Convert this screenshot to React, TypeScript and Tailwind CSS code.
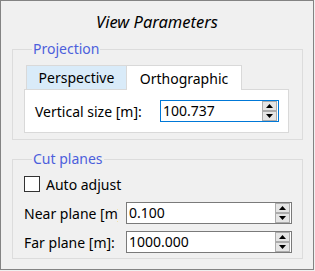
import React from "react";

const font = { fontFamily: '"Noto Sans", "Open Sans", sans-serif' };

function SpinButtons() {
  return (
    <div className="flex flex-col w-[15px] h-[20px] gap-0">
      <div className="flex-1 border border-[#acacac] bg-[#e5e5e5] flex items-center justify-center">
        <svg width="7" height="4" viewBox="0 0 7 4"><polygon points="3.5,0 7,4 0,4" fill="#000" /></svg>
      </div>
      <div className="flex-1 border border-[#acacac] bg-[#e5e5e5] flex items-center justify-center">
        <svg width="7" height="4" viewBox="0 0 7 4"><polygon points="0,0 7,0 3.5,4" fill="#000" /></svg>
      </div>
    </div>
  );
}

function SpinBox({ value, width, focused }: { value: string; width: string; focused?: boolean }) {
  return (
    <div
      className={`${width} h-[22px] bg-white border ${focused ? "border-[#0078d7]" : "border-[#7a7a7a]"} flex items-center pl-[2px] pr-[1px]`}
    >
      <span className="flex-1 text-[14px] leading-[18px] text-black">{value}</span>
      <SpinButtons />
    </div>
  );
}

export default function App() {
  return (
    <div className="w-[315px] h-[271px] bg-[#f0f0f0]" style={font}>
      <div className="w-[314px] h-[270px] border border-[#838383] bg-[#f0f0f0] flex flex-col">
        <div className="pt-[11px] h-[31px] text-center italic text-[16.5px] leading-[20px] text-black">
          View Parameters
        </div>
        <fieldset className="mt-[9px] ml-[11px] w-[291px] border border-[#dcdcdc] pl-[11px] pr-[13px] pt-[7px] pb-[6px]">
          <legend className="ml-[8px] px-[1px] text-[14px] leading-[16px] text-[#4c5fdc]">Projection</legend>
          <div className="flex items-end h-[25px] pl-[2px]">
            <div className="w-[101px] h-[24px] bg-[#d9ebf9] border border-[#d9d9d9] border-b-0 flex items-center justify-center text-[14px] text-black">
              Perspective
            </div>
            <div className="w-[115px] h-[25px] bg-white border border-[#d9d9d9] border-b-0 border-l-0 flex items-center justify-center text-[14px] text-black -mb-[1px] relative z-10">
              Orthographic
            </div>
          </div>
          <div className="w-[265px] h-[44px] bg-white border border-[#d9d9d9] flex items-center pl-[10px]">
            <span className="w-[125px] text-[14px] text-black">Vertical size [m]:</span>
            <SpinBox value="100.737" width="w-[119px]" focused />
          </div>
        </fieldset>
        <fieldset className="mt-[11px] ml-[11px] w-[291px] border border-[#dcdcdc] pl-[11px] pr-[10px] pt-[9px] pb-[5px]">
          <legend className="ml-[8px] px-[1px] text-[14px] leading-[16px] text-[#4c5fdc]">Cut planes</legend>
          <div className="flex items-center h-[16px] gap-[6px]">
            <div className="w-[16px] h-[16px] bg-white border border-[#333]" />
            <span className="text-[14px] text-black">Auto adjust</span>
          </div>
          <div className="flex items-center mt-[10px]">
            <span className="w-[94px] mr-[8px] overflow-hidden whitespace-nowrap text-[14px] text-black">Near plane [m]:</span>
            <SpinBox value="0.100" width="w-[166px]" />
          </div>
          <div className="flex items-center mt-[7px]">
            <span className="w-[94px] mr-[8px] overflow-hidden whitespace-nowrap text-[14px] text-black">Far plane [m]:</span>
            <SpinBox value="1000.000" width="w-[166px]" />
          </div>
        </fieldset>
      </div>
    </div>
  );
}
